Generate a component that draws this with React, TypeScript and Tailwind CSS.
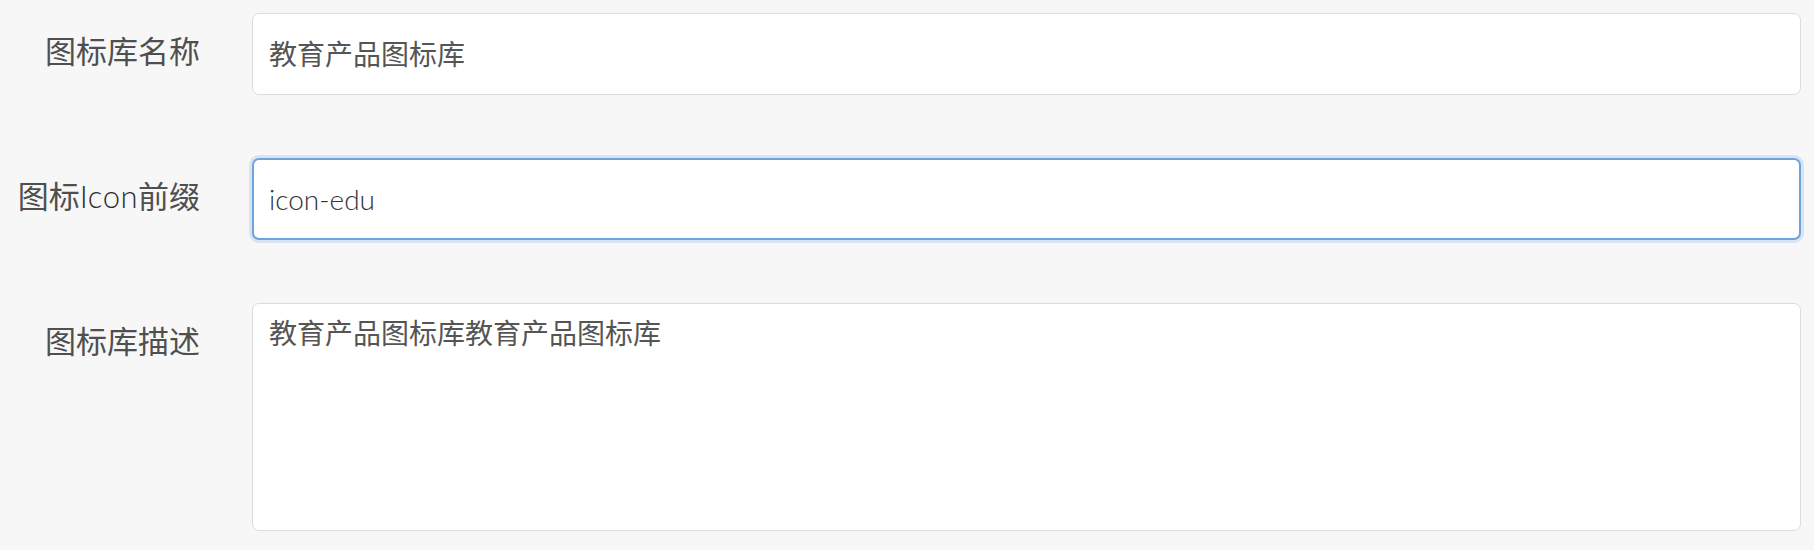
const FONT = "font-['Lato','Noto_Sans_CJK_SC',sans-serif]";

function Label({ children }: { children: React.ReactNode }) {
  return (
    <label className="w-[200px] shrink-0 pt-[20px] text-right text-[31px] leading-[36px] text-[#4f4f4f]">
      {children}
    </label>
  );
}

export default function App() {
  return (
    <div className={`min-h-[550px] w-full bg-[#f7f7f7] pt-[13px] pr-[13px] ${FONT}`}>
      <div className="flex flex-col gap-[63px]">
        {/* 名称 */}
        <div className="flex items-start">
          <Label>图标库名称</Label>
          <div className="ml-[52px] flex h-[82px] flex-1 items-center rounded-[7px] border border-[#dcdcdc] bg-white px-4 text-[28px] text-[#555]">
            教育产品图标库
          </div>
        </div>

        {/* 前缀 */}
        <div className="flex items-start">
          <Label>
            图标<span className="font-light tracking-[0.5px] text-[#2e2e2e]">Icon</span>前缀
          </Label>
          <div className="ml-[52px] flex h-[82px] flex-1 items-center rounded-[7px] border-2 border-[#6fa3df] bg-white px-[15px] text-[28px] font-light text-[#333] shadow-[0_0_0_3px_rgba(111,163,223,0.22)]">
            icon-edu
          </div>
        </div>

        {/* 描述 */}
        <div className="flex items-start">
          <Label>图标库描述</Label>
          <div className="ml-[52px] h-[228px] flex-1 rounded-[7px] border border-[#dcdcdc] bg-white px-4 pt-[12px] text-[28px] leading-[34px] text-[#555]">
            教育产品图标库教育产品图标库
          </div>
        </div>
      </div>
    </div>
  );
}
